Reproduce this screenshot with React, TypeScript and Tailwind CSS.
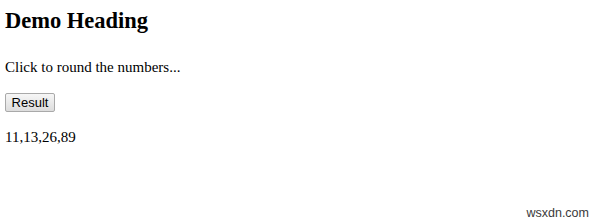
export default function App() {
  return (
    <main className="relative h-[223px] w-[600px] overflow-hidden bg-white pl-[5px] font-['Liberation_Serif',serif] text-black">
      <h2 className="pt-[8px] text-[22.5px] font-bold leading-[26px]">Demo Heading</h2>
      <p className="mt-[24px] text-[15px] leading-[18px]">Click to round the numbers...</p>
      <button className="mt-[17px] h-[19px] w-[50px] rounded-[2px] border border-[#a9a9a9] bg-[linear-gradient(#f6f6f6,#dddddd)] font-['Liberation_Sans',sans-serif] text-[13px] leading-[17px]">
        Result
      </button>
      <p className="mt-[14px] text-[15px] leading-[18px]">11,13,26,89</p>
      <span className="absolute bottom-[3px] right-[11px] font-['Liberation_Sans',sans-serif] text-[12.5px] leading-[14px] text-[#3a3a3a]">
        wsxdn.com
      </span>
    </main>
  );
}
